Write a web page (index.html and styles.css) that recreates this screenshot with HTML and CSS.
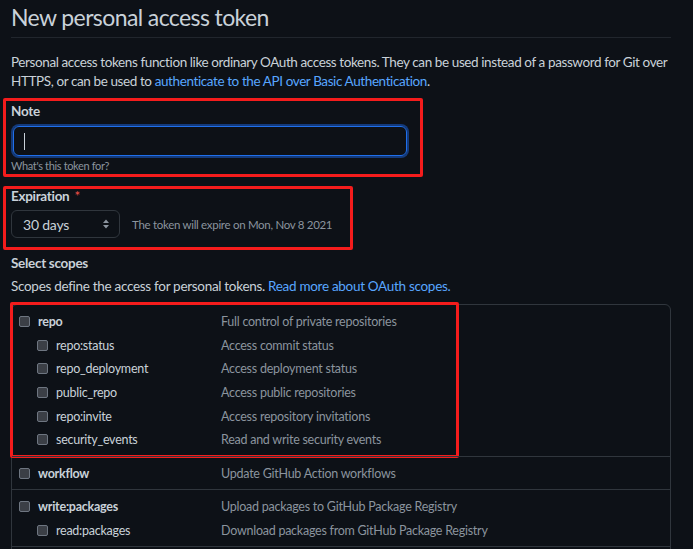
FILE: index.html
```html
<!DOCTYPE html>
<html lang="en">
<head>
    <meta charset="UTF-8">
    <title>New personal access token</title>
    <link rel="stylesheet" href="styles.css">
</head>
<body>
    <div class="container">
        <h2 class="page-title">New personal access token</h2>
        <p class="intro">Personal access tokens function like ordinary OAuth access tokens. They can be used instead of a password for Git over HTTPS, or can be used to <a href="#">authenticate to the API over Basic Authentication</a>.</p>

        <div class="field note-field marked">
            <label>Note</label>
            <div class="note-input"><span class="caret"></span></div>
            <p class="hint">What's this token for?</p>
        </div>

        <div class="field expire-field marked">
            <label>Expiration <span class="req">*</span></label>
            <div class="expire-row">
                <div class="select">
                    <span>30 days</span>
                    <svg width="8" height="12" viewBox="0 0 8 12"><path d="M4 1.5 7 5H1z M4 10.5 1 7h6z" fill="#8b949e"/></svg>
                </div>
                <span class="hint">The token will expire on Mon, Nov 8 2021</span>
            </div>
        </div>

        <h3 class="scopes-title">Select scopes</h3>
        <p class="scopes-desc">Scopes define the access for personal tokens. <a href="#">Read more about OAuth scopes.</a></p>

        <div class="scopes">
            <div class="scope-group marked-repo">
                <div class="scope-row parent"><span class="cb"></span><span class="name">repo</span><span class="desc">Full control of private repositories</span></div>
                <div class="scope-row child"><span class="cb"></span><span class="name">repo:status</span><span class="desc">Access commit status</span></div>
                <div class="scope-row child"><span class="cb"></span><span class="name">repo_deployment</span><span class="desc">Access deployment status</span></div>
                <div class="scope-row child"><span class="cb"></span><span class="name">public_repo</span><span class="desc">Access public repositories</span></div>
                <div class="scope-row child"><span class="cb"></span><span class="name">repo:invite</span><span class="desc">Access repository invitations</span></div>
                <div class="scope-row child"><span class="cb"></span><span class="name">security_events</span><span class="desc">Read and write security events</span></div>
            </div>
            <div class="scope-group">
                <div class="scope-row parent"><span class="cb"></span><span class="name">workflow</span><span class="desc">Update GitHub Action workflows</span></div>
            </div>
            <div class="scope-group">
                <div class="scope-row parent"><span class="cb"></span><span class="name">write:packages</span><span class="desc">Upload packages to GitHub Package Registry</span></div>
                <div class="scope-row child"><span class="cb"></span><span class="name">read:packages</span><span class="desc">Download packages from GitHub Package Registry</span></div>
            </div>
            <div class="scope-group">
                <div class="scope-row parent"><span class="cb"></span><span class="name">delete:packages</span><span class="desc">Delete packages from GitHub Package Registry</span></div>
            </div>
        </div>
    </div>
</body>
</html>
```
FILE: styles.css
```css
body { margin: 0; background: #0d1117; color: #c9d1d9; font-family: Lato, "Liberation Sans", sans-serif; font-size: 13.5px; letter-spacing: -0.3px; overflow: hidden; }
a { color: #58a6ff; text-decoration: none; }
.container { width: 660px; margin-left: 11px; }

.page-title { margin: 0; padding: 3px 0 6px; font-size: 23px; letter-spacing: -0.6px; font-weight: normal; line-height: 28px; border-bottom: 1px solid #21262d; }
.intro { margin: 15px 0 0; line-height: 19px; letter-spacing: -0.4px; }

.field { position: relative; }
.field label { display: block; font-weight: bold; line-height: 20px; }
.hint { color: #8b949e; font-size: 11.5px; letter-spacing: -0.3px; }

.marked::after { content: ""; position: absolute; border: 3px solid #f41c1c; border-radius: 2px; pointer-events: none; }

.note-field { margin-top: 10px; }
.note-field::after { left: -8px; top: -3px; width: 414px; height: 73px; }
.note-input { width: 392px; height: 28px; margin: 5px 2px 0; border: 1px solid #1f6feb; border-radius: 6px; box-shadow: 0 0 0 2px #143a7a; display: flex; align-items: center; }
.caret { width: 1px; height: 17px; margin-left: 10px; background: #c9d1d9; }
.note-field .hint { margin: 2px 0 0; line-height: 16px; font-size: 11px; letter-spacing: -0.35px; }

.expire-field { margin-top: 12px; }
.expire-field::after { left: -8px; top: 0; width: 344px; height: 58px; }
.req { color: #f85149; font-weight: normal; margin-left: 2px; }
.expire-row { display: flex; align-items: center; gap: 12px; margin-top: 4px; }
.select { height: 26px; border: 1px solid #30363d; border-radius: 6px; display: flex; align-items: center; justify-content: space-between; padding: 0 9px 0 11px; width: 87px; font-size: 14px; letter-spacing: -0.2px; }

.scopes-title { margin: 15px 0 0; font-size: 13.5px; line-height: 20px; }
.scopes-desc { margin: 3px 0 0; line-height: 20px; }

.scopes { margin-top: 8px; border: 1px solid #30363d; border-radius: 6px; font-size: 12.5px; letter-spacing: -0.25px; }
.scope-group { padding: 5px 0 4px; border-top: 1px solid #30363d; position: relative; }
.scope-group:first-child { border-top: none; }
.scope-row { display: flex; align-items: center; height: 23.6px; }
.cb { width: 9px; height: 9px; border: 1px solid #6e7681; background: #3b3f46; border-radius: 2px; flex: none; }
.parent .cb { margin-left: 7px; }
.child .cb { margin-left: 25px; }
.name { width: 183px; margin-left: 8px; flex: none; }
.child .name { width: 165px; }
.parent .name { font-weight: bold; }
.desc { color: #8b949e; }

.marked-repo::after { content: ""; position: absolute; left: -2px; top: -3px; width: 443px; height: 150px; border: 3px solid #f41c1c; border-radius: 2px; }
```
